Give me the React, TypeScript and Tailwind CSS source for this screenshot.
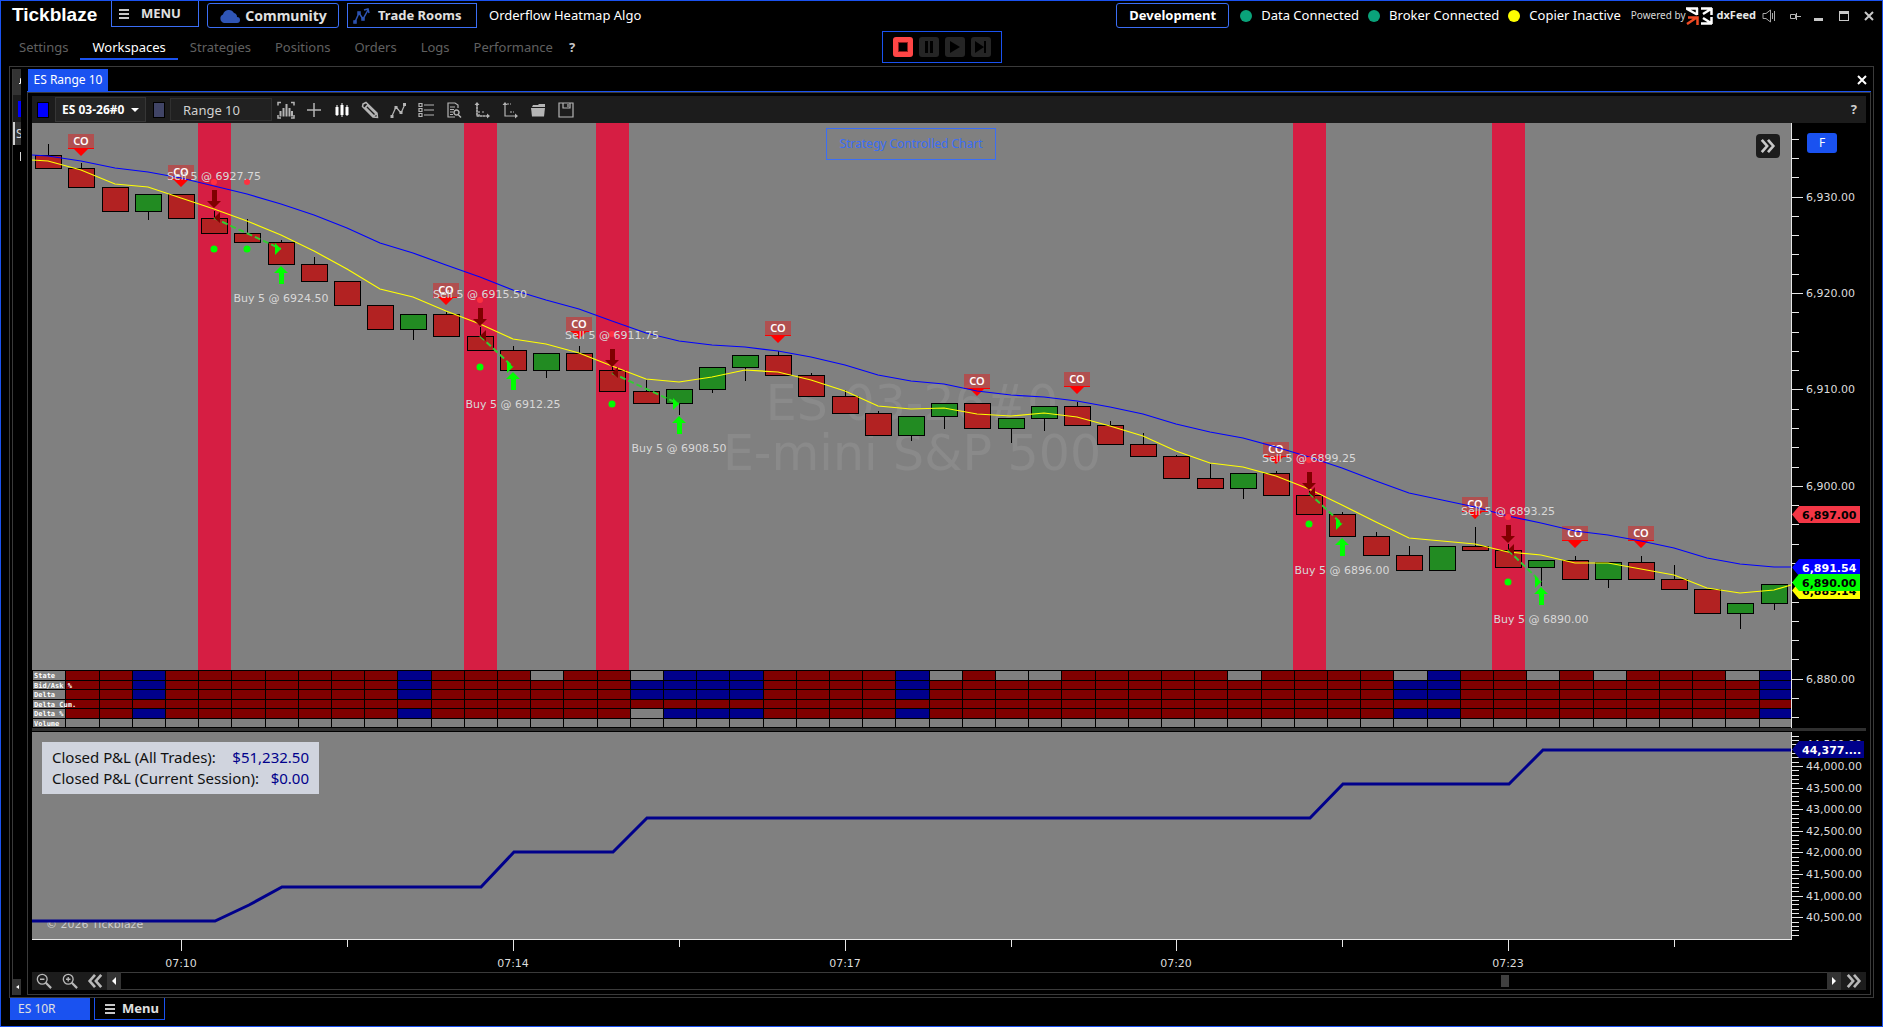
import type { ReactNode } from 'react';

type Candle = [kind: 'up' | 'down', top: number, bottom: number, high: number, low: number];

interface Trade {
  entry: number;
  exit: number;
  entryY: number;
  exitY: number;
  sellPrice: string;
  buyPrice: string;
  sellTextY: number;
  buyTextY: number;
  downY: number;
  upY: number;
}

const NAV = ['Settings', 'Workspaces', 'Strategies', 'Positions', 'Orders', 'Logs', 'Performance'];

const CANDLES: Candle[] = [
  ['down', 155, 168, 144, 168],
  ['down', 168, 187, 163, 187],
  ['down', 187, 211, 187, 211],
  ['up', 194, 211, 194, 219],
  ['down', 194, 218, 194, 218],
  ['down', 218, 233, 211, 233],
  ['down', 233, 242, 219, 242],
  ['down', 242, 264, 240, 264],
  ['down', 264, 281, 257, 281],
  ['down', 281, 305, 281, 305],
  ['down', 305, 329, 305, 329],
  ['up', 314, 329, 314, 339],
  ['down', 314, 336, 312, 336],
  ['down', 336, 350, 327, 350],
  ['down', 350, 370, 346, 370],
  ['up', 353, 370, 353, 377],
  ['down', 353, 370, 346, 370],
  ['down', 370, 391, 367, 391],
  ['down', 391, 403, 380, 403],
  ['up', 389, 403, 389, 414],
  ['up', 367, 389, 367, 392],
  ['up', 355, 367, 355, 380],
  ['down', 355, 375, 351, 375],
  ['down', 375, 396, 373, 396],
  ['down', 396, 413, 390, 413],
  ['down', 413, 435, 411, 435],
  ['up', 416, 435, 416, 440],
  ['up', 403, 416, 403, 428],
  ['down', 403, 428, 403, 428],
  ['up', 418, 428, 418, 442],
  ['up', 406, 418, 406, 430],
  ['down', 406, 425, 402, 425],
  ['down', 425, 444, 421, 444],
  ['down', 444, 456, 433, 456],
  ['down', 456, 478, 455, 478],
  ['down', 478, 488, 464, 488],
  ['up', 473, 488, 473, 498],
  ['down', 473, 495, 471, 495],
  ['down', 495, 514, 491, 514],
  ['down', 514, 536, 512, 536],
  ['down', 536, 555, 532, 555],
  ['down', 555, 570, 546, 570],
  ['up', 546, 570, 546, 570],
  ['down', 546, 550, 527, 550],
  ['down', 550, 567, 544, 567],
  ['up', 560, 567, 560, 585],
  ['down', 560, 579, 556, 579],
  ['up', 562, 579, 562, 587],
  ['down', 562, 579, 556, 579],
  ['down', 579, 589, 565, 589],
  ['down', 589, 613, 589, 613],
  ['up', 603, 613, 603, 628],
  ['up', 584, 603, 584, 609],
];

const SLOW_MA = [
  156, 161, 168, 172, 178, 186, 194, 204, 215, 228, 243, 253, 265, 277, 290, 300, 309, 321, 333, 341, 345, 347,
  351, 357, 365, 375, 381, 384, 391, 395, 397, 401, 407, 414, 424, 432, 438, 447, 457, 468, 481, 493, 500, 507,
  516, 523, 531, 535, 541, 548, 558, 564, 567,
];

const FAST_MA = [
  161, 170, 184, 187, 198, 209, 221, 235, 251, 269, 289, 297, 311, 324, 339, 344, 353, 366, 379, 382, 377, 370,
  372, 380, 391, 406, 409, 408, 414, 416, 413, 417, 426, 436, 451, 463, 467, 476, 489, 505, 522, 538, 541, 544,
  552, 555, 563, 563, 569, 575, 588, 593, 590,
];

const CROSS_OVERS = [
  { bar: 1, y: 134 },
  { bar: 4, y: 165 },
  { bar: 12, y: 283 },
  { bar: 16, y: 317 },
  { bar: 22, y: 321 },
  { bar: 28, y: 374 },
  { bar: 31, y: 372 },
  { bar: 37, y: 442 },
  { bar: 43, y: 497 },
  { bar: 46, y: 526 },
  { bar: 48, y: 526 },
];

const TRADES: Trade[] = [
  { entry: 5, exit: 7, entryY: 218, exitY: 249, sellPrice: '6927.75', buyPrice: '6924.50', sellTextY: 180, buyTextY: 302, downY: 190, upY: 266 },
  { entry: 13, exit: 14, entryY: 336, exitY: 367, sellPrice: '6915.50', buyPrice: '6912.25', sellTextY: 298, buyTextY: 408, downY: 308, upY: 372 },
  { entry: 17, exit: 19, entryY: 373, exitY: 404, sellPrice: '6911.75', buyPrice: '6908.50', sellTextY: 339, buyTextY: 452, downY: 349, upY: 416 },
  { entry: 38, exit: 39, entryY: 493, exitY: 524, sellPrice: '6899.25', buyPrice: '6896.00', sellTextY: 462, buyTextY: 574, downY: 472, upY: 538 },
  { entry: 44, exit: 45, entryY: 550, exitY: 582, sellPrice: '6893.25', buyPrice: '6890.00', sellTextY: 515, buyTextY: 623, downY: 525, upY: 587 },
];

// stop and target dots, one pair for every bar a position is held over
const DOT_BARS = [
  { bar: 5, red: 182, green: 249 },
  { bar: 6, red: 182, green: 249 },
  { bar: 13, red: 300, green: 367 },
  { bar: 17, red: 334, green: 404 },
  { bar: 38, red: 460, green: 524 },
  { bar: 44, red: 517, green: 582 },
];

const POSITIVE = [3, 11, 18, 19, 20, 21, 26, 41, 42, 52];

const HEAT_ROWS = [
  { label: 'State', y: 670, h: 10, blue: [3, 11, 19, 20, 21, 26, 42, 52], gray: [15, 18, 27, 29, 30, 36, 41, 45, 47, 51] },
  { label: 'Bid/Ask %', y: 680, h: 9, blue: POSITIVE, gray: [] as number[] },
  { label: 'Delta', y: 689, h: 10, blue: POSITIVE, gray: [] as number[] },
  { label: 'Delta Cum.', y: 699, h: 9, blue: [] as number[], gray: [] as number[] },
  { label: 'Delta %', y: 708, h: 10, blue: POSITIVE.filter((b) => b !== 18), gray: [18] },
  { label: 'Volume', y: 718, h: 9, blue: [] as number[], gray: CANDLES.map((_, i) => i) },
];

const PRICE_LABELS = [6930, 6920, 6910, 6900, 6890, 6880];
const PNL_LABELS = [44500, 44000, 43500, 43000, 42500, 42000, 41500, 41000, 40500];
const TIME_LABELS = [
  { bar: 4, text: '07:10' },
  { bar: 14, text: '07:14' },
  { bar: 24, text: '07:17' },
  { bar: 34, text: '07:20' },
  { bar: 44, text: '07:23' },
];

const PNL_POINTS =
  '32,921 215,921 249,905 282,887 481,887 514,852 613,852 647,818 1310,818 1343,784 1509,784 1543,750 1791,750';

const SCROLL_POSITION = 80.9;

const barX = (i: number) => Math.round(48.3 + i * 33.18);
const cellX = (i: number) => Math.floor(32.7 + i * 33.2);
const priceY = (p: number) => Math.round(196.5 + (6930 - p) * 9.644);
const pnlY = (v: number) => Math.round(766 + ((44000 - v) / 500) * 21.62);
const money = (v: number) => v.toLocaleString('en-US', { minimumFractionDigits: 2 });

const maPoints = (values: number[], first: number, last: number) =>
  [`32,${first}`, ...values.map((y, i) => `${barX(i)},${y}`), `1791,${last}`].join(' ');

function PriceTag({ y, fill, color, text, right = 1860 }: { y: number; fill: string; color: string; text: string; right?: number }) {
  return (
    <g>
      <path d={`M1792 ${y + 8.5}L1799 ${y}H${right}V${y + 17}H1799Z`} fill={fill} />
      <text x="1802" y={y + 13} fontSize="11" fontWeight="700" fill={color}>
        {text}
      </text>
    </g>
  );
}

function CrossOver({ bar, y }: { bar: number; y: number }) {
  const x = barX(bar);
  return (
    <g>
      <rect x={x - 13} y={y} width="26" height="15" fill="#e02020" fillOpacity="0.5" />
      <path d={`M${x - 13} ${y + 14}h26v1H${x + 7}l-7 7l-7 -7h-6z`} fill="#ff0000" />
      <text x={x} y={y + 11} textAnchor="middle" fontSize="11" fontWeight="600" fill="#fff" fontFamily="'Noto Sans', sans-serif">
        CO
      </text>
    </g>
  );
}

function TradeMark({ t }: { t: Trade }) {
  const x1 = barX(t.entry);
  const x2 = barX(t.exit);
  return (
    <g>
      <line x1={x1} y1={t.entryY} x2={x2} y2={t.exitY} stroke="#32cd32" strokeWidth="2" strokeDasharray="6 3" />
      <path d={`M${x1} ${t.entryY}l6 -6v11z`} fill="#800000" />
      <path d={`M${x2} ${t.exitY}l-6 -6v12z`} fill="#00ff00" />
      <path d={`M${x1 - 2} ${t.downY}h5v11h4l-7 7l-7 -7h5z`} fill="#800000" />
      <path d={`M${x2} ${t.upY}l7 7h-4v11h-5v-11h-5z`} fill="#00ff00" />
      <text x={x1} y={t.sellTextY} textAnchor="middle" fontSize="11" fill="#d8d8d8">
        Sell 5 @ {t.sellPrice}
      </text>
      <text x={x2} y={t.buyTextY} textAnchor="middle" fontSize="11" fill="#d8d8d8">
        Buy 5 @ {t.buyPrice}
      </text>
    </g>
  );
}

function PriceChart() {
  const minor = Array.from({ length: 32 }, (_, i) => 6936 - i * 2);
  return (
    <svg viewBox="32 123 1834 605" className="block h-auto w-full font-['DejaVu_Sans',sans-serif]" role="img" aria-label="ES 03-26 price chart">
      <rect x="32" y="123" width="1759" height="605" fill="#808080" />
      {TRADES.map((t) => (
        <rect key={t.entry} x={barX(t.entry) - 16} y="123" width="33" height="547" fill="#d61e43" />
      ))}
      <g fill="#8a8a8a" fontSize="49" textAnchor="middle">
        <text x="912" y="420">ES 03-26#0</text>
        <text x="912" y="470">E-mini S&amp;P 500</text>
      </g>

      {CANDLES.map(([kind, top, bottom, high, low], i) => (
        <g key={i} stroke="#000" shapeRendering="crispEdges">
          <line x1={barX(i) + 0.5} x2={barX(i) + 0.5} y1={high} y2={low + 1} />
          <rect x={barX(i) - 12.5} y={top + 0.5} width="26" height={bottom - top} fill={kind === 'up' ? '#228b22' : '#b22222'} />
        </g>
      ))}

      {CROSS_OVERS.map((c) => (
        <CrossOver key={c.bar} {...c} />
      ))}
      <polyline points={maPoints(SLOW_MA, 155, 567)} fill="none" stroke="#0000ff" strokeWidth="1.2" />
      <polyline points={maPoints(FAST_MA, 160, 585)} fill="none" stroke="#ffff00" strokeWidth="1.2" />
      {DOT_BARS.map((d) => (
        <g key={d.bar}>
          <circle cx={barX(d.bar)} cy={d.red} r="3" fill="#ff3040" />
          <circle cx={barX(d.bar)} cy={d.green} r="3.5" fill="#00ff00" />
        </g>
      ))}
      {TRADES.map((t) => (
        <TradeMark key={t.entry} t={t} />
      ))}

      <g shapeRendering="crispEdges">
        {HEAT_ROWS.map((row) =>
          CANDLES.map((_, i) => {
            const x = cellX(i);
            const fill = i === 0 || row.gray.includes(i) ? '#808080' : row.blue.includes(i) ? '#00008b' : '#800000';
            return (
              <rect
                key={`${row.label}${i}`}
                x={x + 0.5}
                y={row.y + 0.5}
                width={Math.min(cellX(i + 1), 1792) - x}
                height={row.h}
                fill={fill}
                stroke="#000"
              />
            );
          }),
        )}
      </g>
      <g fontSize="7" fontWeight="700" fill="#fff" fontFamily="'DejaVu Sans Mono', monospace">
        {HEAT_ROWS.map((row) => (
          <text key={row.label} x="34" y={row.y + 8}>
            {row.label}
          </text>
        ))}
      </g>

      <rect x="1791" y="123" width="75" height="605" fill="#000" />
      <g fill="#e6e6e6" shapeRendering="crispEdges">
        <rect x="1791" y="123" width="1" height="605" />
        {minor.map((p) => (
          <rect key={p} x="1792" y={priceY(p)} width={p % 10 === 0 ? 11 : 7} height="1" />
        ))}
      </g>
      <g fill="#dcdcdc" fontSize="11">
        {PRICE_LABELS.map((p) => (
          <text key={p} x="1806" y={priceY(p) + 4}>
            {money(p)}
          </text>
        ))}
      </g>
      <PriceTag y={506} fill="#f23645" color="#000" text="6,897.00" />
      <PriceTag y={582} fill="#ffff00" color="#000" text="6,889.14" />
      <PriceTag y={559} fill="#0000ff" color="#fff" text="6,891.54" />
      <PriceTag y={574} fill="#00ff00" color="#000" text="6,890.00" />
    </svg>
  );
}

function PnlChart() {
  const ticks = Array.from({ length: 47 }, (_, i) => 44700 - i * 100);
  return (
    <svg viewBox="32 732 1834 240" className="block h-auto w-full font-['DejaVu_Sans',sans-serif]" role="img" aria-label="Closed profit and loss">
      <rect x="32" y="732" width="1759" height="207" fill="#808080" />
      <text x="46" y="928" fontSize="11" fill="#cfcfcf">
        © 2026 Tickblaze
      </text>
      <polyline points={PNL_POINTS} fill="none" stroke="#00008b" strokeWidth="3" />
      <g fill="#e6e6e6" shapeRendering="crispEdges">
        <rect x="1791" y="732" width="1" height="207" />
        <rect x="32" y="939" width="1760" height="1" />
        {ticks.map((v) => (
          <rect key={v} x="1792" y={pnlY(v)} width={v % 500 === 0 ? 11 : 7} height="1" />
        ))}
        {TIME_LABELS.map(({ bar }) => (
          <g key={bar}>
            <rect x={barX(bar)} y="940" width="1" height="11" />
            <rect x={barX(bar + 5)} y="940" width="1" height="7" />
          </g>
        ))}
      </g>
      <g fill="#dcdcdc" fontSize="11">
        {PNL_LABELS.map((v) => (
          <text key={v} x="1806" y={pnlY(v) + 4}>
            {money(v)}
          </text>
        ))}
        {TIME_LABELS.map(({ bar, text }) => (
          <text key={bar} x={barX(bar)} y="967" textAnchor="middle">
            {text}
          </text>
        ))}
      </g>
      <PriceTag y={741} fill="#00008b" color="#fff" text="44,377...." right={1864} />
    </svg>
  );
}

function Icon({ children, size = 18 }: { children: ReactNode; size?: number }) {
  return (
    <svg width={size} height={size} viewBox="0 0 18 18" fill="none" stroke="currentColor" strokeWidth="1.5" aria-hidden="true">
      {children}
    </svg>
  );
}

const TOOLS: { label: string; art: ReactNode }[] = [
  {
    label: 'Chart type',
    art: (
      <>
        <path d="M1 4.5V1.5h3M14 1.5h3v3M1 14v3h3M14 17h3v-3" />
        <path d="M3.500 15.500V10M6.500 15.500V7M9.500 15.500V3M12.500 15.500V7M15 15.500V10" strokeWidth="2" />
      </>
    ),
  },
  { label: 'Crosshair', art: <path d="M9 2v14M2 9h14" /> },
  {
    label: 'Bar style',
    art: (
      <>
        <path d="M4 4v11M9 2v14M14 4v11" stroke="#fff" strokeWidth="1" />
        <path d="M4 6v8M9 4v10M14 6v8" stroke="#fff" strokeWidth="3" />
      </>
    ),
  },
  {
    label: 'Drawing tools',
    art: <path d="M2 3l3-1.500L16 12l.5 4.500L12 16 1.500 5.500zM4 6l9 9M6 4l9 9M12.500 15.500l3-3M3.500 7.500l4-4.500" />,
  },
  {
    label: 'Indicators',
    art: (
      <>
        <path d="M3 15L7 6l5 6 4-9" strokeWidth="1.200" />
        <path d="M1.500 14h3v3h-3zM5.500 5h3v3h-3zM10.500 10h3v3h-3zM14 2h3v3h-3z" fill="currentColor" stroke="none" />
      </>
    ),
  },
  { label: 'Object list', art: <path d="M2 2.500h3v3H2zM2 7.500h3v3H2zM2 12.500h3v3H2zM7 4h10M7 9h10M7 14h10" strokeWidth="1.200" /> },
  {
    label: 'Data window',
    art: (
      <>
        <path d="M13 7V4l-3-2H3v14h7M5 6h5M5 8.500h4M5 11h3M5 13.500h3" strokeWidth="1.200" />
        <path d="M14 11.500a2.500 2.500 0 1 1-5 0a2.500 2.500 0 1 1 5 0zM13 13.500l3 3" />
      </>
    ),
  },
  {
    label: 'Scale vertical',
    art: (
      <>
        <path d="M4 3v12h11M6 15V9M9 11h3" strokeWidth="1.200" strokeDasharray="2 1" />
        <path d="M4 3v12h11" strokeWidth="1.200" />
        <path d="M1.500 4L4 1l2.500 3zM14 12.500l3 2.500-3 2.500z" fill="currentColor" stroke="none" />
      </>
    ),
  },
  {
    label: 'Scale horizontal',
    art: (
      <>
        <path d="M4 3v12h11" strokeWidth="1.200" />
        <path d="M6 3h4M9 11h4" strokeWidth="1.200" strokeDasharray="2 1" />
        <path d="M1.500 4L4 1l2.500 3zM14 12.500l3 2.500-3 2.500z" fill="currentColor" stroke="none" />
      </>
    ),
  },
  {
    label: 'Open',
    art: (
      <>
        <path d="M3 6l1-2h5l1-1h6v3z" fill="currentColor" stroke="none" />
        <path d="M2 7h14l-1 8.500H3z" fill="currentColor" stroke="none" />
      </>
    ),
  },
  { label: 'Save', art: <path d="M2 2h14v14H2zM6 2v5h7V2M11 3v3" strokeWidth="1.200" /> },
];

function Chevrons({ back = false }: { back?: boolean }) {
  return (
    <Icon size={16}>
      <path d={back ? 'M9 2L3 9l6 7M16 2l-6 7 6 7' : 'M2 2l6 7-6 7M9 2l6 7-6 7'} strokeWidth="3" />
    </Icon>
  );
}

function Burger() {
  return (
    <svg width="10" height="10" viewBox="0 0 10 10" fill="#c8c8c8" aria-hidden="true">
      <path d="M0 0h10v2H0zM0 4h10v2H0zM0 8h10v2H0z" />
    </svg>
  );
}

function Status({ color, children }: { color: string; children: ReactNode }) {
  return (
    <span className="flex items-center gap-[9px]">
      <span className={`size-3 rounded-full ${color}`} />
      {children}
    </span>
  );
}

function Header() {
  return (
    <header className="flex h-[30px] items-start text-[13px] text-white">
      <h1 className="w-[110px] pl-[11px] font-['Liberation_Sans',sans-serif] text-[19px] leading-[28px] font-bold">Tickblaze</h1>
      <button className="flex h-[26px] w-[88px] items-center gap-3 border border-t-0 border-[#3b6ef5] pl-[7px] text-[13px] font-bold text-[#e0e0e0]">
        <Burger />
        MENU
      </button>
      <button className="mt-[2px] ml-2 flex h-[25px] w-[132px] items-center justify-center gap-[5px] rounded-[3px] border border-[#3b6ef5] text-[14px] font-bold text-[#e0e0e0]">
        <svg width="21" height="14" viewBox="0 0 21 14" fill="#2f55b5" aria-hidden="true">
          <path d="M5 14a4.500 4.500 0 0 1-1-8.500A6 6 0 0 1 15 4a4 4 0 0 1 3 4a3 3 0 0 1 0 6z" />
        </svg>
        Community
      </button>
      <button className="mt-[2px] ml-2 flex h-[25px] w-[130px] items-center gap-2 border border-[#3b6ef5] pl-[5px] text-[13px] font-bold text-[#e0e0e0]">
        <svg width="17" height="17" viewBox="0 0 17 17" fill="none" stroke="#2f55b5" strokeWidth="1.500" aria-hidden="true">
          <path d="M2 15L6 6l4 6 5-9M11 3l4-1 1 4" />
          <path d="M1 14h2v2H1zM5 5h2v2H5zM9 11h2v2H9z" />
        </svg>
        Trade Rooms
      </button>
      <span className="ml-3 leading-[29px]">Orderflow Heatmap Algo</span>

      <div className="ml-auto flex h-[29px] items-center">
        <button className="mr-[11px] h-[25px] w-[113px] rounded-[3px] border border-[#3b6ef5] text-[13px] font-bold text-white">Development</button>
        <div className="flex gap-[9px]">
          <Status color="bg-[#0aa37a]">Data Connected</Status>
          <Status color="bg-[#0aa37a]">Broker Connected</Status>
          <Status color="bg-[#ffff00]">Copier Inactive</Status>
        </div>
        <span className="ml-[10px] text-[10px] text-[#d8d8d8]">Powered by</span>
        <svg width="27" height="18" viewBox="0 0 27 18" fill="none" stroke="#fff" strokeWidth="2.500" aria-hidden="true">
          <path d="M0 1.500h12M1 2l10 5.500M11 1v7" />
          <path d="M26 1.500H15M25.500 1v7M25 2l-8 5" />
          <path d="M26 16.500H15M25.500 17v-7M25 16l-8-5" />
          <path d="M1 17l9-6M2 10.500h9.500V18" stroke="#f04a23" />
        </svg>
        <span className="ml-1 text-[11px] font-bold text-[#e8e8e8]">dxFeed</span>
        <button aria-label="Sound" className="ml-[6px] text-[#a8a8a8]">
          <svg width="14" height="14" viewBox="0 0 14 14" fill="none" stroke="currentColor" aria-hidden="true">
            <path d="M1 4.500h3L8.500 1v12L4 9.500H1zM10.500 4v6M12.500 2v10" />
          </svg>
        </button>
        <button aria-label="Pin" className="ml-[13px] text-[#b8b8b8]">
          <svg width="12" height="12" viewBox="0 0 12 12" fill="none" stroke="currentColor" aria-hidden="true">
            <path d="M1.500 4.500h5v4h-5zM7.500 3v7M8 6.500h4" />
          </svg>
        </button>
        <button aria-label="Minimize" className="ml-[13px] text-[#c8c8c8]">
          <svg width="10" height="10" viewBox="0 0 10 10" aria-hidden="true">
            <path d="M0 7h9v3H0z" fill="currentColor" />
          </svg>
        </button>
        <button aria-label="Maximize" className="ml-[15px] text-[#c8c8c8]">
          <svg width="10" height="10" viewBox="0 0 10 10" aria-hidden="true">
            <path d="M0 0h10v10H0zM1 3v6h8V3z" fill="currentColor" fillRule="evenodd" />
          </svg>
        </button>
        <button aria-label="Close" className="mr-2 ml-[15px] text-[#c8c8c8]">
          <svg width="10" height="10" viewBox="0 0 10 10" stroke="currentColor" strokeWidth="2" aria-hidden="true">
            <path d="M1 1l8 8M9 1L1 9" />
          </svg>
        </button>
      </div>
    </header>
  );
}

function NavRow() {
  return (
    <div className="grid h-[35px] grid-cols-[1fr_auto_1fr] items-start">
      <nav className="flex pl-[6px] text-[13px] leading-[27px]">
        {NAV.map((item) => (
          <a
            key={item}
            href={`#${item.toLowerCase()}`}
            className={
              item === 'Workspaces'
                ? 'h-[29px] border-b-2 border-[#1a52f0] px-3 pt-[3px] text-white'
                : 'h-[29px] px-3 pt-[3px] text-[#606060]'
            }
          >
            {item}
          </a>
        ))}
        <a href="#help" className="px-1 pt-[3px] font-bold text-[#c8c8c8]">
          ?
        </a>
      </nav>
      <div className="flex gap-[6px] border border-[#1a52f0] px-[10px] py-[5px]">
        <button aria-label="Stop" className="grid size-5 place-items-center rounded-[3px] bg-[#ff4646]">
          <span className="size-[10px] border border-[#8a1c1c] bg-black" />
        </button>
        <button aria-label="Pause" className="grid size-5 place-items-center rounded-[3px] bg-[#252525]">
          <svg width="8" height="12" viewBox="0 0 8 12" aria-hidden="true">
            <path d="M0 0h3v12H0zM5 0h3v12H5z" />
          </svg>
        </button>
        <button aria-label="Play" className="grid size-5 place-items-center rounded-[3px] bg-[#252525]">
          <svg width="10" height="14" viewBox="0 0 10 14" aria-hidden="true">
            <path d="M0 1l10 6-10 6z" />
          </svg>
        </button>
        <button aria-label="Step" className="grid size-5 place-items-center rounded-[3px] bg-[#252525]">
          <svg width="12" height="14" viewBox="0 0 12 14" aria-hidden="true">
            <path d="M0 1l9 6-9 6zM9 1h2v12H9z" />
          </svg>
        </button>
      </div>
    </div>
  );
}

function ChartToolbar() {
  return (
    <div className="flex h-[27px] items-center bg-[#1c1c1c] text-[#d0d0d0]">
      <button aria-label="Link colour" className="ml-[5px] h-4 w-3 border border-black bg-[#0000ff]" />
      <label className="relative ml-[6px] flex h-[25px] w-[91px] items-center border border-[#363636] bg-[#242424]">
        <select aria-label="Symbol" className="h-full w-full appearance-none bg-transparent pl-[6px] text-[12px] font-bold text-white">
          <option>ES 03-26#0</option>
        </select>
        <svg width="8" height="4" viewBox="0 0 8 4" fill="#fff" className="pointer-events-none absolute right-[6px]" aria-hidden="true">
          <path d="M0 0h8L4 4z" />
        </svg>
      </label>
      <button aria-label="Interval link colour" className="ml-[7px] h-4 w-3 border border-black bg-[#404466]" />
      <input
        aria-label="Interval"
        defaultValue="Range 10"
        className="ml-[5px] h-[23px] w-[102px] border border-[#303030] bg-[#212121] pl-3 text-[13px] text-[#d0d0d0]"
      />
      <div className="ml-[5px] flex gap-[10px] text-[#b4b4b4]">
        {TOOLS.map((tool) => (
          <button key={tool.label} aria-label={tool.label} className="size-[18px]">
            <Icon>{tool.art}</Icon>
          </button>
        ))}
      </div>
      <button aria-label="Help" className="mr-[9px] ml-auto text-[13px] font-bold">
        ?
      </button>
    </div>
  );
}

function ChartScroll() {
  return (
    <div className="flex h-[18px] bg-[#1c1c1c] text-[#b8b8b8]">
      <div className="flex w-[75px] items-center justify-between px-1">
        <button aria-label="Zoom out">
          <Icon size={16}>
            <path d="M12.500 7a5.500 5.500 0 1 1-11 0a5.500 5.500 0 1 1 11 0zM4.500 7h5" />
            <path d="M11 11l6 6" strokeWidth="2.500" />
          </Icon>
        </button>
        <button aria-label="Zoom in">
          <Icon size={16}>
            <path d="M12.500 7a5.500 5.500 0 1 1-11 0a5.500 5.500 0 1 1 11 0zM4.500 7h5M7 4.500v5" />
            <path d="M11 11l6 6" strokeWidth="2.500" />
          </Icon>
        </button>
        <button aria-label="Back">
          <Chevrons back />
        </button>
      </div>
      <button aria-label="Scroll left" className="grid w-[14px] place-items-center bg-[#333333]">
        <svg width="4" height="8" viewBox="0 0 4 8" fill="#fff" aria-hidden="true">
          <path d="M4 0v8L0 4z" />
        </svg>
      </button>
      <div className="flex-1 border-y border-[#3a3a3a] bg-black py-[2px]">
        <div className="h-3 w-2 bg-[#404040]" style={{ marginLeft: `${SCROLL_POSITION}%` }} />
      </div>
      <button aria-label="Scroll right" className="grid w-[14px] place-items-center bg-[#333333]">
        <svg width="4" height="8" viewBox="0 0 4 8" fill="#fff" aria-hidden="true">
          <path d="M0 0v8l4-4z" />
        </svg>
      </button>
      <button aria-label="Forward" className="grid w-[25px] place-items-center">
        <Chevrons />
      </button>
    </div>
  );
}

// edge of the panel that lies under the active chart
function HiddenPanel() {
  return (
    <aside className="flex w-[9px] flex-col overflow-hidden border-l border-[#3a3a3a] text-[12px] text-[#d8d8d8]">
      <div className="h-[26px] bg-[#333333] pt-[9px] pl-[6px]">
        <svg width="3" height="6" viewBox="0 0 3 6" stroke="#fff" fill="none" aria-hidden="true">
          <path d="M3 .5H1.500v5H0" />
        </svg>
      </div>
      <div className="h-[27px] bg-[#1c1c1c] py-[6px] pl-[5px]">
        <div className="h-4 bg-[#0000ff]" />
      </div>
      <div className="h-[23px] border-l-2 border-[#d0d0d0] bg-[#333333] pl-px leading-[23px]">S</div>
      <div className="h-[24px] pt-[7px] pl-[7px]">
        <div className="h-[9px] w-px bg-[#d8d8d8]" />
      </div>
      <div className="mt-auto grid h-4 place-items-center bg-[#333333]">
        <svg width="3" height="4" viewBox="0 0 3 4" fill="#fff" aria-hidden="true">
          <path d="M3 0v4L0 2z" />
        </svg>
      </div>
    </aside>
  );
}

export default function App() {
  return (
    <div className="flex min-h-screen flex-col border border-[#1a52f0] bg-black font-['Noto_Sans','Open_Sans',sans-serif]">
      <Header />
      <NavRow />

      <main className="mx-2 flex gap-[6px] border border-[#3a3a3a] p-[2px]">
        <HiddenPanel />
        <section className="min-w-0 flex-1">
          <div className="flex h-[23px] justify-between border-b border-[#1a52f0]">
            <button className="ml-px w-20 bg-[#1a52f0] text-[12px] leading-[22px] text-white">ES Range 10</button>
            <button aria-label="Close chart" className="mr-1 text-white">
              <svg width="10" height="10" viewBox="0 0 10 10" stroke="currentColor" strokeWidth="2" aria-hidden="true">
                <path d="M1 1l8 8M9 1L1 9" />
              </svg>
            </button>
          </div>

          <div className="border border-[#3a3a3a] px-1 pt-[3px] pb-1">
            <ChartToolbar />
            <div className="relative">
              <PriceChart />
              <div className="absolute top-[5px] left-[794px] w-[170px] border border-[#3b6ef5] py-[6px] text-center text-[12px] leading-[18px] text-[#3b6ef5]">
                Strategy Controlled Chart
              </div>
              <button aria-label="Jump to latest" className="absolute top-[11px] right-[86px] grid size-6 place-items-center rounded-[4px] bg-[#1c1c1c] text-[#c8c8c8]">
                <Chevrons />
              </button>
              <button className="absolute top-[10px] right-[29px] h-5 w-[30px] rounded-[3px] bg-[#1a52f0] text-[12px] leading-5 text-white">F</button>
            </div>
            <div className="h-1 border-b border-black bg-[#303030]" />
            <div className="relative">
              <PnlChart />
              <dl className="absolute top-[10px] left-[10px] w-[277px] bg-[#d0d4de] px-[10px] py-[5px] text-[15px] leading-[21px] whitespace-nowrap">
                <div className="flex justify-between">
                  <dt className="text-[#111]">Closed P&amp;L (All Trades):</dt>
                  <dd className="text-[#00008b]">$51,232.50</dd>
                </div>
                <div className="flex justify-between">
                  <dt className="text-[#111]">Closed P&amp;L (Current Session):</dt>
                  <dd className="text-[#00008b]">$0.00</dd>
                </div>
              </dl>
            </div>
            <ChartScroll />
          </div>
        </section>
      </main>

      <footer className="flex gap-1 pb-[6px] pl-[9px]">
        <button className="h-[22px] w-20 bg-[#1a52f0] pl-2 text-left text-[12px] text-[#e0e0e0]">ES 10R</button>
        <button className="flex h-[22px] w-[71px] items-center gap-[7px] border border-t-0 border-[#1a52f0] pl-[10px] text-[13px] font-bold text-[#e0e0e0]">
          <Burger />
          Menu
        </button>
      </footer>
    </div>
  );
}
